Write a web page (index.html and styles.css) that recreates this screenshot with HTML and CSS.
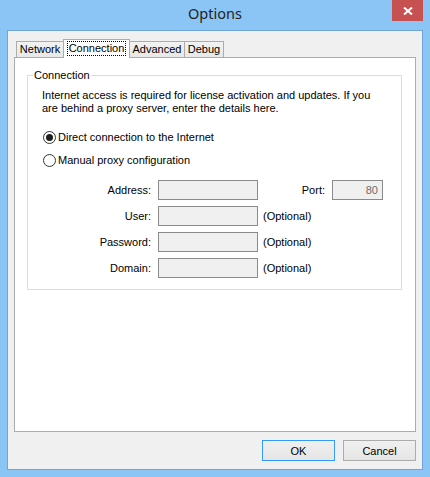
FILE: index.html
```html
<!DOCTYPE html>
<html>
<head>
<meta charset="utf-8">
<link rel="stylesheet" href="styles.css">
</head>
<body>
<div class="window">
  <div class="titlebar">
    <div class="spacer"></div>
    <div class="title">Options</div>
    <div class="close"><svg width="10" height="8" viewBox="0 0 10 8"><path d="M1 0.5 L9 7.5 M9 0.5 L1 7.5" stroke="#fff" stroke-width="2" fill="none"/></svg></div>
  </div>
  <div class="client">
    <div class="tabs">
      <div class="tab tab-network">Network</div>
      <div class="tab tab-connection selected"><span class="focus">Connection</span></div>
      <div class="tab tab-advanced">Advanced</div>
      <div class="tab tab-debug">Debug</div>
    </div>
    <div class="panel">
      <div class="group">
        <span class="legend">Connection</span>
        <p class="info">Internet access is required for license activation and updates. If you<br>are behind a proxy server, enter the details here.</p>
        <div class="radio radio-first"><span class="circle checked"></span><span>Direct connection to the Internet</span></div>
        <div class="radio radio-second"><span class="circle"></span><span>Manual proxy configuration</span></div>
        <div class="form">
          <span class="lbl">Address:</span><span class="input"></span><span class="extra"><span class="port-lbl">Port:</span><span class="input port">80</span></span>
          <span class="lbl">User:</span><span class="input"></span><span class="extra">(Optional)</span>
          <span class="lbl">Password:</span><span class="input"></span><span class="extra">(Optional)</span>
          <span class="lbl">Domain:</span><span class="input"></span><span class="extra">(Optional)</span>
        </div>
      </div>
    </div>
    <div class="buttons">
      <button class="btn btn-default">OK</button>
      <button class="btn">Cancel</button>
    </div>
  </div>
</div>
</body>
</html>
```
FILE: styles.css
```css
body {
  margin: 0;
  font-family: "Liberation Sans", Arial, sans-serif;
  font-size: 11px;
  color: #000;
}
.window {
  width: 430px;
  height: 477px;
  background: #8bc5f6;
  display: flex;
  flex-direction: column;
}
.titlebar {
  height: 30px;
  display: grid;
  grid-template-columns: 1fr auto 1fr;
  align-items: start;
}
.title {
  font-family: "Noto Sans", "Open Sans", sans-serif;
  font-size: 14.5px;
  line-height: 27px;
  color: #222;
}
.close {
  justify-self: end;
  margin-right: 7px;
  width: 31px;
  height: 21px;
  background: #c75050;
  display: flex;
  align-items: center;
  justify-content: center;
}
.close svg { display: block; }
.client {
  flex: 1;
  margin: 0 7px 7px;
  border: 1px solid #6fa5d8;
  background: #f0f0f0;
  padding: 8px 6px 0;
  display: flex;
  flex-direction: column;
}
.tabs {
  display: flex;
  align-items: flex-end;
  height: 18px;
  padding-left: 2px;
}
.tab {
  box-sizing: border-box;
  height: 16px;
  border: 1px solid #acacac;
  border-bottom: none;
  background: linear-gradient(#f2f2f2, #e8e8e8);
  margin-left: -1px;
  text-align: center;
  line-height: 14px;
  white-space: nowrap;
}
.tab-network { width: 48px; margin-left: 0; }
.tab-connection { width: 67px; }
.tab-advanced { width: 56px; }
.tab-debug { width: 40px; }
.tab.selected {
  height: 19px;
  background: #fff;
  margin-bottom: -1px;
  position: relative;
  z-index: 1;
  padding-top: 1px;
}
.focus {
  display: inline-block;
  line-height: 13px;
  padding: 0 1px;
  outline: 1px dotted #000;
  outline-offset: 0;
}
.panel {
  box-sizing: border-box;
  height: 375px;
  border: 1px solid #acacac;
  background: #fff;
}
.group {
  margin: 17px 13px 0 12px;
  border: 1px solid #dcdcdc;
  padding-bottom: 11px;
}
.legend {
  display: table;
  margin: -7px 0 0 5px;
  padding: 0 1px;
  background: #fff;
  line-height: 13px;
}
.info {
  margin: 7px 0 0 14px;
  line-height: 13px;
}
.radio {
  display: flex;
  align-items: center;
  height: 14px;
  margin-left: 15px;
}
.radio-first { margin-top: 15px; }
.radio-second { margin-top: 9px; }
.circle {
  box-sizing: border-box;
  width: 13px;
  height: 13px;
  border: 1px solid #333;
  border-radius: 50%;
  background: #fff;
  margin-right: 2px;
  display: flex;
  align-items: center;
  justify-content: center;
}
.circle.checked::after {
  content: "";
  width: 7px;
  height: 7px;
  border-radius: 50%;
  background: #1e1e1e;
}
.form {
  margin-top: 13px;
  display: grid;
  grid-template-columns: 130px 100px auto;
  row-gap: 6px;
  align-items: center;
}
.lbl {
  text-align: right;
  padding-right: 7px;
}
.input {
  box-sizing: border-box;
  height: 20px;
  border: 1px solid #8a8a8a;
  background: #f0f0f0;
}
.extra {
  padding-left: 5px;
  display: flex;
  align-items: center;
}
.port-lbl {
  width: 62px;
  text-align: right;
  margin-right: 7px;
}
.input.port {
  width: 51px;
  text-align: right;
  color: #6d6d6d;
  line-height: 18px;
  padding-right: 4px;
}
.buttons {
  display: flex;
  justify-content: flex-end;
  gap: 8px;
  margin-top: 8px;
}
.btn {
  box-sizing: border-box;
  width: 73px;
  height: 21px;
  border: 1px solid #acacac;
  background: linear-gradient(#f0f0f0, #e5e5e5);
  font-family: "Liberation Sans", Arial, sans-serif;
  font-size: 11px;
  color: #000;
  padding: 0;
  border-radius: 0;
}
.btn-default {
  border-color: #3399ff;
}
```
